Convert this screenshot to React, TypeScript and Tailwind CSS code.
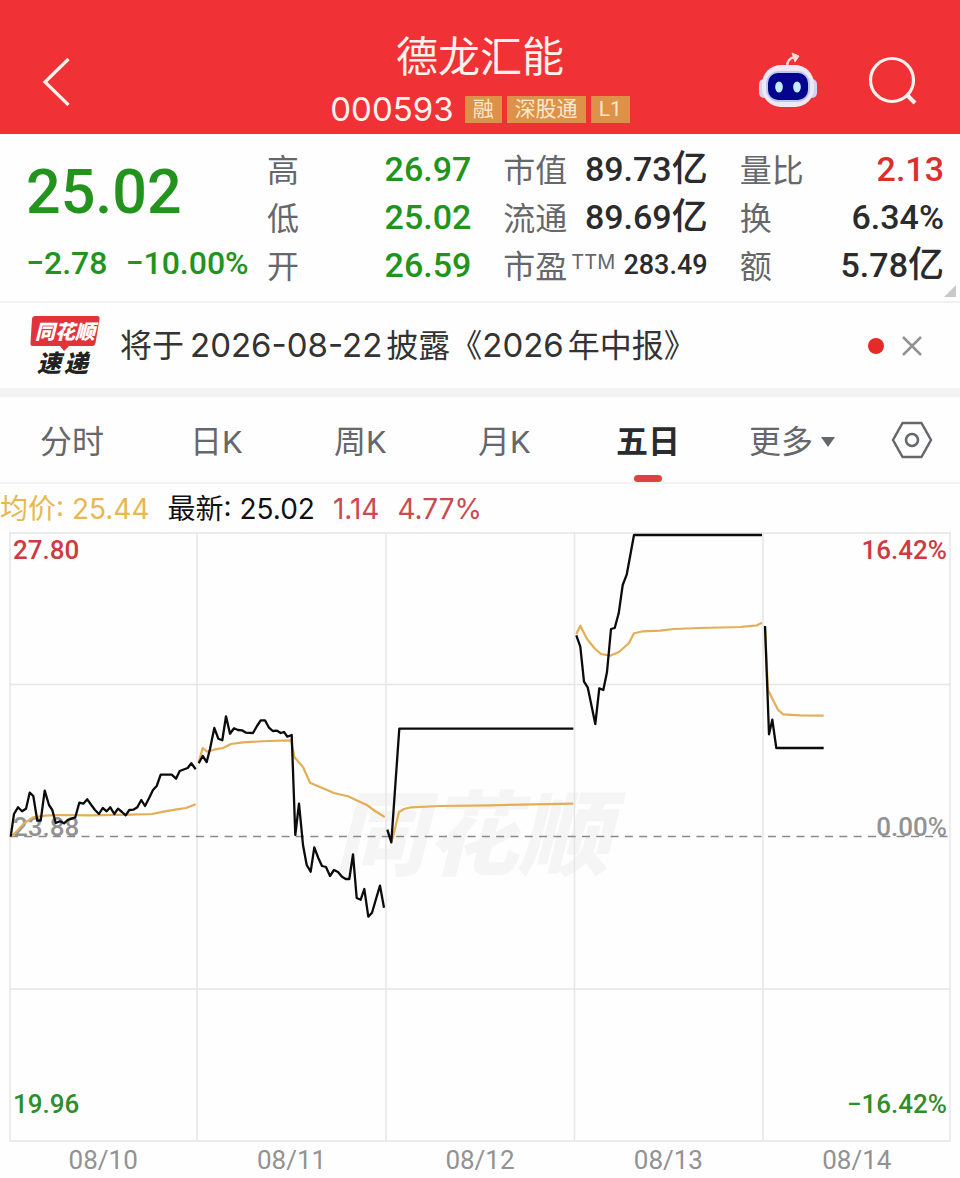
import React, { useState } from 'react';

const TABS = ['分时', '日K', '周K', '月K', '五日'];
const DATES = ['08/10', '08/11', '08/12', '08/13', '08/14'];

const PRICE_LINES = [
  '10.7,836.7 14,814 18,807.3 22,811.3 26,808.7 29.7,792.7 33.3,796 37.3,820.7 40.7,820.7 44.7,790.7 49,805 52.3,810 55.7,823 60,821.3 64,823.3 67.7,820 75.3,817.3 79.3,802.7 83.3,803.7 87.3,799.3 91.3,805 95,810 99,814 102.7,808 106.7,811.3 110.3,807.3 114.3,814 118,808.7 122,812 125.7,815.3 129.3,810 133.3,809.7 137.3,807.3 141.3,800 145,806 149,798.3 153,790 156.7,786 160.7,774.7 171.7,774.7 176,778.7 179.7,771 187.7,768 191.3,763.3 195.7,769.3',
  '198.7,763.3 202.7,756 206.7,762 210,749 214.3,728 218.3,738.7 222.3,740.3 226,716.3 230,733.7 234,728.3 238,730 242,730.3 246,732.7 253,733 257,726 260.7,720.3 265,720.3 269,727.7 272.7,731 277,730.7 280.7,733 284,732 287.3,736.7 291.7,735 295.3,835 299,803.7 303,845 306.7,865 310.7,871.7 314.3,847.3 318.3,858 322,866 326,867 330,876 334,870 338,872 342,876.7 345.7,879 349.3,879 353,854.3 356.7,898 360.7,899.7 364.3,889 368.3,916.7 372,912.7 376,899 380,885.7 384,907.7',
  '387.3,829.7 391.3,842.3 399.3,728.7 573.3,728.7',
  '576.3,635.3 580.3,646.7 584,681.7 587.7,687.3 595.3,724 599.3,688.3 603.3,690 607,672 611,629 614.7,628 618.7,613.3 622.7,585 626.7,574.7 634,535 762,535',
  '765,626 769,734.3 772.3,719.7 776.3,748 823.7,748',
];

const AVERAGE_LINES = [
  '11,836.7 17,831 24,823.3 33,817.3 45,815.7 58,815 90,815.3 130,814.7 152,814 165,811.3 177,809.3 186,808 195.7,804.3',
  '198.7,762 202.7,748 207,751.7 214,749.7 223,748 231,744 243,742.3 268,741 291,740.3 294.5,757.3 303,767 310,782.7 320,787 334,793 348,796.3 358,801 367,805 375,811 384.7,817',
  '391.3,842 393,837 399,812 404,809 411,807.3 440,806 490,805.3 573.3,803.7',
  '576.3,634 580.3,625.7 587,639 595,648.7 601,654 610,655.7 619,652 629,643 634,633.3 643,631.3 660,630.7 674,629 700,628 740,627 757,625.3 762,622.7',
  '765,627 768,690 772,698 778,709.7 783,714.3 800,715.3 823.7,715.7',
];

interface RowProps {
  label: React.ReactNode;
  value: string;
  unit?: string;
  tone?: string;
  small?: boolean;
}

const Row: React.FC<RowProps> = ({ label, value, unit, tone = 'text-[#2a2b2d]', small }) => (
  <div className="flex h-12 items-center justify-between whitespace-nowrap">
    <dt className="flex items-start pt-1 text-[32px] leading-12 text-[#66676a]">{label}</dt>
    <dd className={`flex items-center font-medium leading-12 ${small ? 'text-[27px]' : 'text-[34px]'} ${tone}`}>
      {value}
      {unit && <span className="text-[36px]">{unit}</span>}
    </dd>
  </div>
);

const Header = () => (
  <header className="grid h-[134px] grid-cols-[1fr_auto_1fr] items-end bg-[#f03136] pb-1 text-[#fff1ec]">
    <button aria-label="返回" className="mb-6 ml-10 w-8 justify-self-start">
      <svg viewBox="0 0 32 60" className="h-[60px] w-8" fill="none" stroke="currentColor" strokeWidth="3.2">
        <path d="M28.500 13 5 36l23.500 23" />
      </svg>
    </button>
    <div className="flex flex-col items-center">
      <h1 className="text-[42px] leading-[60px]">德龙汇能</h1>
      <div className="flex items-center gap-[5px]">
        <span className="mr-1.5 font-['Inter','Noto_Sans_CJK_SC',sans-serif] text-[33px] leading-[42px]">000593</span>
        {['融', '深股通', 'L1'].map((tag) => (
          <span key={tag} className="bg-[#dd9149] px-2 text-[21px] leading-[27px] text-[#ffe8cc]">{tag}</span>
        ))}
      </div>
    </div>
    <div className="mb-5 mr-[42px] flex items-center gap-[50px] justify-self-end">
      <button aria-label="智能助手">
        <svg viewBox="0 0 60 58" className="h-[58px] w-[60px]">
          <path d="M29 15c0-6 2-9 8-10" fill="none" stroke="#ffd9d6" strokeWidth="2.500" />
          <path d="m34 1 7 3-4 6z" fill="#ffd9d6" stroke="#ffd9d6" strokeLinejoin="round" />
          <rect x="1" y="27" width="10" height="19" rx="5" fill="#cfd3f5" />
          <rect x="49" y="27" width="10" height="19" rx="5" fill="#cfd3f5" />
          <rect x="4" y="13" width="52" height="42" rx="19" fill="#f0e8f2" />
          <rect x="8" y="19" width="44" height="31" rx="13" fill="#b9c6fa" />
          <rect x="10" y="21" width="40" height="27" rx="10" fill="#04058c" />
          <ellipse cx="21" cy="35" rx="3.800" ry="5.500" fill="#c4ecff" />
          <ellipse cx="39" cy="35" rx="3.800" ry="5.500" fill="#c4ecff" />
        </svg>
      </button>
      <button aria-label="搜索">
        <svg viewBox="0 0 50 50" className="h-[50px] w-[50px]" fill="none" stroke="currentColor" strokeWidth="3.200">
          <circle cx="24" cy="24" r="21.500" />
          <path d="m39 39 8 8" strokeWidth="4" />
        </svg>
      </button>
    </div>
  </header>
);

const Quote = () => (
  <section className="relative flex h-[169px] border-b-2 border-[#f1f1f1] pl-[26px] pr-4 pt-[11px]">
    <div className="w-[241px] shrink-0 whitespace-nowrap font-medium text-[#22931c]">
      <div className="text-[61px] leading-[94px]">25.02</div>
      <div className="flex gap-[18px] text-[32px] leading-[48px]">
        <span>−2.78</span>
        <span>−10.00%</span>
      </div>
    </div>
    <div className="grid flex-1 grid-cols-3 gap-x-8">
      <dl>
        <Row label="高" value="26.97" tone="text-[#22931c]" />
        <Row label="低" value="25.02" tone="text-[#22931c]" />
        <Row label="开" value="26.59" tone="text-[#22931c]" />
      </dl>
      <dl>
        <Row label="市值" value="89.73" unit="亿" />
        <Row label="流通" value="89.69" unit="亿" />
        <Row label={<>市盈<span className="ml-1 font-['Inter',sans-serif] text-[20px] leading-[38px]">TTM</span></>} value="283.49" small />
      </dl>
      <dl>
        <Row label="量比" value="2.13" tone="text-[#dc2f2b]" />
        <Row label="换" value="6.34%" />
        <Row label="额" value="5.78" unit="亿" />
      </dl>
    </div>
    <svg viewBox="0 0 12 12" className="absolute bottom-1 right-1 h-3 w-3"><path d="M12 0v12H0z" fill="#c9c9c9" /></svg>
  </section>
);

const Notice = () => {
  const [open, setOpen] = useState(true);
  if (!open) return null;
  return (
    <section className="flex h-[85px] items-center pl-[29px] pr-9">
      <svg viewBox="0 -10 72 82" className="h-[82px] w-[72px] shrink-0" fontFamily="'Noto Sans CJK SC', sans-serif" fontWeight="900" fontStyle="italic">
        <path d="M6 1h62q3 0 2.500 3l-4 24q-.5 3-3.500 3H40l-5 5-4-5H4q-3 0-2.500-3L3 4q.5-3 3-3z" fill="#e0343a" />
        <text x="6" y="24" fontSize="20" fill="#fff">同花顺</text>
        <text x="8" y="57" fontSize="24" fill="#222">速</text>
        <text x="35" y="57" fontSize="24" fill="#222">递</text>
      </svg>
      <p className="ml-[19px] flex-1 whitespace-nowrap font-['Inter','Noto_Sans_CJK_SC',sans-serif] text-[32px] leading-12 text-[#333]">
        将于<span className="ml-1.5 mr-1 text-[33px]">2026-08-22</span>披露《<span className="mr-1 text-[33px]">2026</span>年中报》
      </p>
      <span className="mr-4 h-4 w-4 rounded-full bg-[#e62a28]" />
      <button aria-label="关闭" onClick={() => setOpen(false)}>
        <svg viewBox="0 0 24 24" className="h-6 w-6" stroke="#929292" strokeWidth="2.500"><path d="m3 3 18 18M21 3 3 21" /></svg>
      </button>
    </section>
  );
};

const Chart = () => (
  <section>
    <div className="relative mx-[9px]">
      <div className="absolute inset-0 flex items-center justify-center pr-4 text-[92px] font-black italic text-[#f5f5f6]">
        <span>同花顺</span>
      </div>
      <div className="absolute inset-0 flex flex-col justify-between px-1 text-[26px] font-medium leading-9">
        <div className="flex justify-between text-[#cf3a40]"><span>27.80</span><span>16.42%</span></div>
        <div className="flex justify-between text-[#929292]"><span>23.88</span><span>0.00%</span></div>
        <div className="flex justify-between pb-5 text-[#2f8d2b]"><span>19.96</span><span>−16.42%</span></div>
      </div>
      <svg viewBox="9 532 942 610" className="relative block h-auto w-full" fill="none">
        <path d="M10 533H950V1141H10zM10 684.500H950M10 989H950M197 533V1141M386 533V1141M574.500 533V1141M763 533V1141" stroke="#e6e6e7" strokeWidth="1.500" />
        <path d="M10 836.500H950" stroke="#8a8a8a" strokeWidth="1.500" strokeDasharray="8 6.300" />
        {AVERAGE_LINES.map((points) => (
          <polyline key={points} points={points} stroke="#e3ae55" strokeWidth="2.200" strokeLinejoin="round" />
        ))}
        {PRICE_LINES.map((points) => (
          <polyline key={points} points={points} stroke="#0b0b0b" strokeWidth="2.300" strokeLinejoin="round" />
        ))}
      </svg>
    </div>
    <div className="mx-[9px] grid grid-cols-5 text-center text-[26px] leading-9 text-[#929292]">
      {DATES.map((date) => <span key={date}>{date}</span>)}
    </div>
  </section>
);

const App: React.FC = () => {
  const [activeTab, setActiveTab] = useState('五日');

  return (
    <div className="min-h-screen bg-[#fefefe] font-['Roboto','Noto_Sans_CJK_SC',sans-serif]">
      <Header />
      <Quote />
      <Notice />
      <div className="h-[9px] bg-[#f3f3f3]" />

      {/* Period tabs */}
      <nav className="grid h-[87px] grid-cols-[repeat(6,3fr)_2fr] border-b-2 border-[#f3f3f3] text-[32px] text-[#66676a]">
        {TABS.map((tab) => (
          <button
            key={tab}
            onClick={() => setActiveTab(tab)}
            className={`relative pt-1 ${activeTab === tab ? 'font-bold text-[#2a2b2d]' : ''}`}
          >
            {tab}
            {activeTab === tab && <span className="absolute bottom-0 left-1/2 h-[7px] w-7 -translate-x-1/2 rounded-full bg-[#df423e]" />}
          </button>
        ))}
        <button className="flex items-center justify-center gap-2 pt-1">
          更多
          <svg viewBox="0 0 14 10" className="h-[10px] w-[14px]"><path d="M0 0h14L7 10z" fill="#66676a" /></svg>
        </button>
        <button aria-label="设置" className="flex items-center justify-center">
          <svg viewBox="0 0 42 38" className="h-[38px] w-[42px]" fill="none" stroke="#66676a" strokeWidth="2.500" strokeLinejoin="round">
            <path d="M11.500 2h19L40 19l-9.500 17h-19L2 19z" />
            <circle cx="21" cy="19" r="6" />
          </svg>
        </button>
      </nav>

      <div className="flex h-12 items-center gap-[18px] whitespace-nowrap pt-0.5 font-['Inter','Noto_Sans_CJK_SC',sans-serif] text-[28px]">
        <span className="text-[#e8b84f]">均价: 25.44</span>
        <span className="text-[#111]">最新: 25.02</span>
        <span className="text-[#cb4a50]">1.14</span>
        <span className="text-[#cb4a50]">4.77%</span>
      </div>
      <Chart />
    </div>
  );
};

export default App;
